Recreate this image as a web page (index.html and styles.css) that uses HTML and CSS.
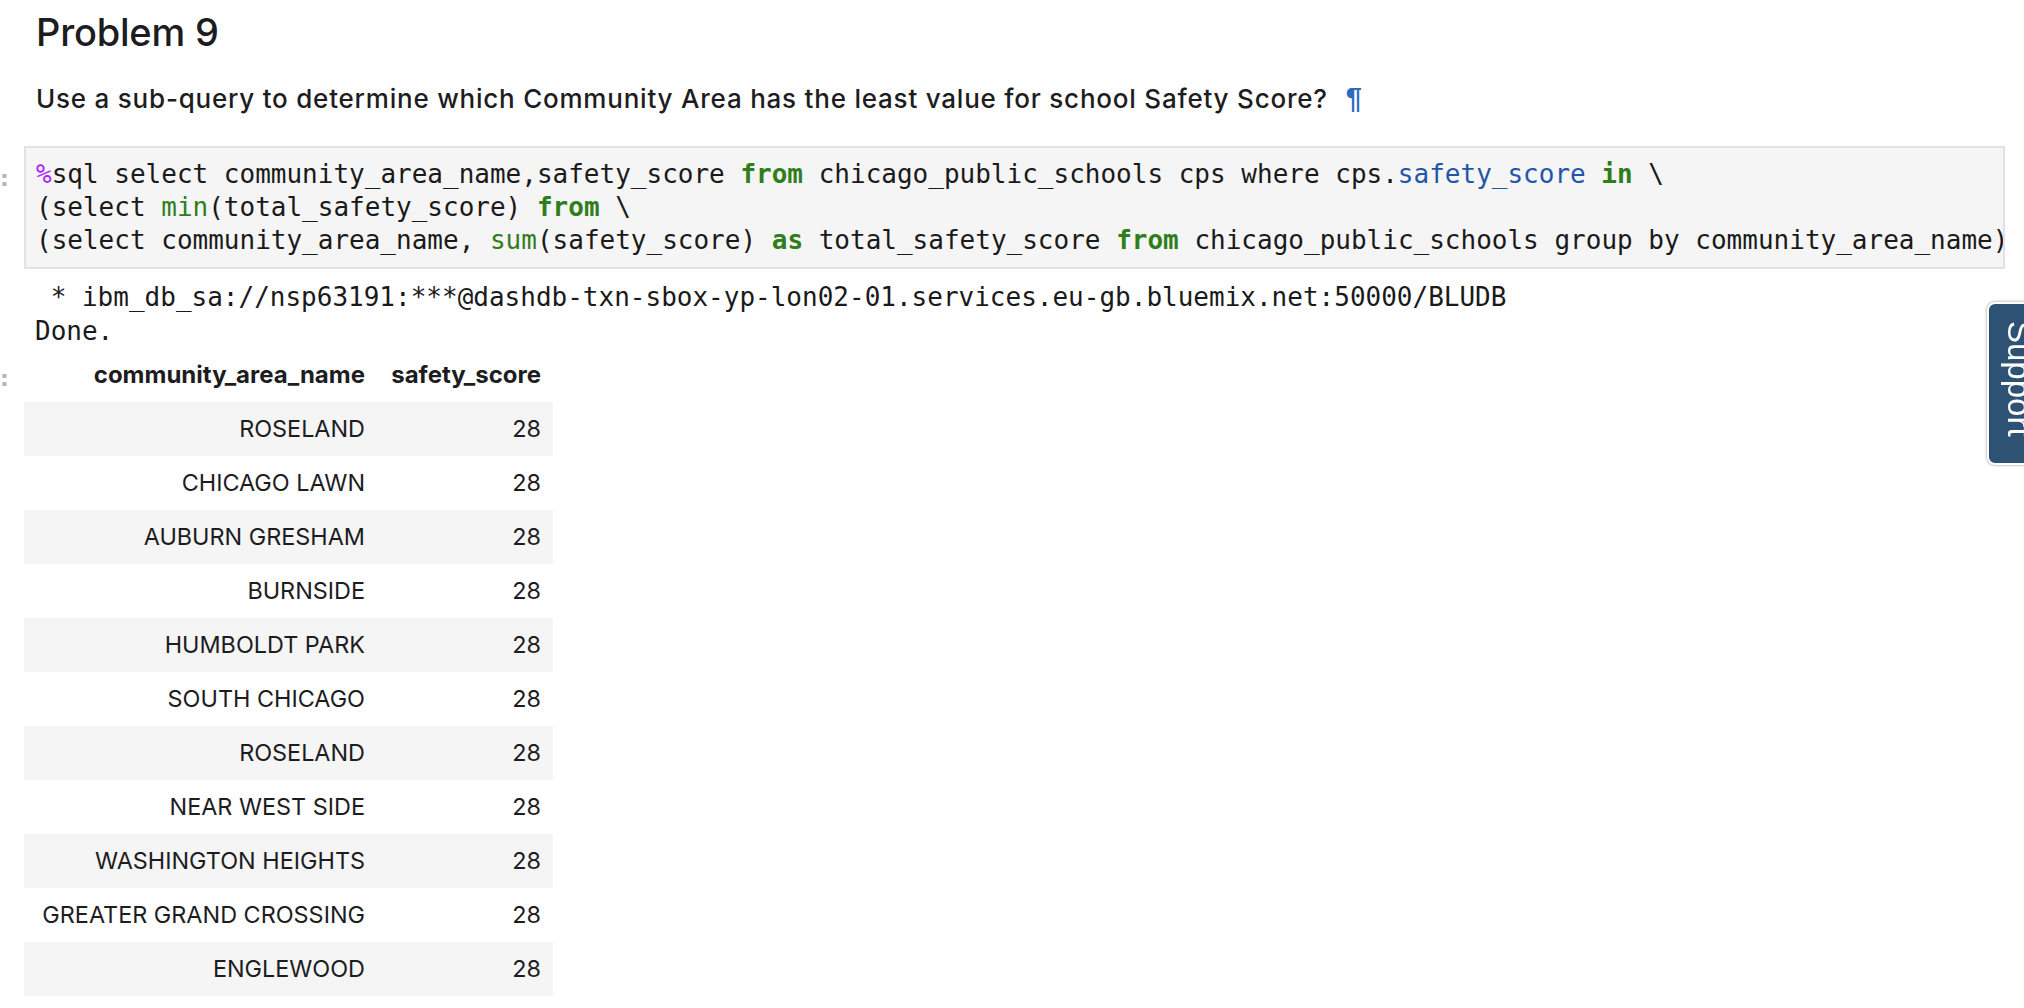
FILE: index.html
```html
<!DOCTYPE html>
<html lang="en">
<head>
<meta charset="utf-8">
<title>Problem 9</title>
<link rel="stylesheet" href="styles.css">
</head>
<body>
<div class="notebook">
  <div class="cell md-cell">
    <div class="prompt"></div>
    <div class="md-body">
      <h2 class="title">Problem 9</h2>
      <p class="question">Use a sub-query to determine which Community Area has the least value for school Safety Score?<a class="anchor" href="#">¶</a></p>
    </div>
  </div>

  <div class="cell code-cell">
    <div class="prompt code-prompt"><span class="colon">:</span></div>
    <pre class="input"><span class="magic">%</span>sql select community_area_name,safety_score <span class="kw">from</span> chicago_public_schools cps where cps.<span class="prop">safety_score</span> <span class="kw">in</span> \
(select <span class="bi">min</span>(total_safety_score) <span class="kw">from</span> \
(select community_area_name, <span class="bi">sum</span>(safety_score) <span class="kw">as</span> total_safety_score <span class="kw">from</span> chicago_public_schools group by community_area_name)</pre>
  </div>

  <div class="cell out-cell">
    <div class="prompt"></div>
    <pre class="stream"> * ibm_db_sa://nsp63191:***@dashdb-txn-sbox-yp-lon02-01.services.eu-gb.bluemix.net:50000/BLUDB
Done.</pre>
  </div>

  <div class="cell out-cell">
    <div class="prompt table-prompt"><span class="colon">:</span></div>
    <table class="result">
      <thead>
        <tr><th class="c1">community_area_name</th><th class="c2">safety_score</th></tr>
      </thead>
      <tbody>
        <tr><td>ROSELAND</td><td>28</td></tr>
        <tr><td>CHICAGO LAWN</td><td>28</td></tr>
        <tr><td>AUBURN GRESHAM</td><td>28</td></tr>
        <tr><td>BURNSIDE</td><td>28</td></tr>
        <tr><td>HUMBOLDT PARK</td><td>28</td></tr>
        <tr><td>SOUTH CHICAGO</td><td>28</td></tr>
        <tr><td>ROSELAND</td><td>28</td></tr>
        <tr><td>NEAR WEST SIDE</td><td>28</td></tr>
        <tr><td>WASHINGTON HEIGHTS</td><td>28</td></tr>
        <tr><td>GREATER GRAND CROSSING</td><td>28</td></tr>
        <tr><td>ENGLEWOOD</td><td>28</td></tr>
      </tbody>
    </table>
  </div>
</div>

<div class="support"><span class="support-label">Support</span></div>
</body>
</html>
```

FILE: styles.css
```css
* {
  box-sizing: border-box;
}

html,
body {
  margin: 0;
  padding: 0;
  background: #ffffff;
}

body {
  font-family: Inter, "Noto Sans", sans-serif;
  color: #1d1d1f;
  overflow: hidden;
}

.notebook {
  width: 2005px;
  padding-top: 9px;
}

.cell {
  display: flex;
  align-items: flex-start;
}

.prompt {
  flex: none;
  width: 24px;
  color: #b4b4b4;
  font-family: "DejaVu Sans", sans-serif;
  font-weight: bold;
  font-size: 22px;
  line-height: 22px;
}

.code-prompt {
  padding-top: 22px;
}

.table-prompt {
  padding-top: 20px;
}

.md-body {
  flex: 1;
  padding-left: 12px;
}

.title {
  margin: 0;
  font-size: 38px;
  line-height: 46px;
  font-weight: 500;
  letter-spacing: -0.2px;
}

.question {
  margin: 27px 0 31px;
  font-size: 26px;
  line-height: 32px;
  font-weight: 500;
  letter-spacing: 0.78px;
}

.anchor {
  color: #2a6dbf;
  text-decoration: none;
  margin-left: 18px;
  font-family: "Liberation Sans", Arial, sans-serif;
  font-weight: 700;
  font-size: 29px;
}

.input {
  flex: 1;
  margin: 0;
  background: #f5f5f5;
  border: 2px solid #e2e2e2;
  padding: 10px;
  font-family: "DejaVu Sans Mono", monospace;
  font-size: 26px;
  line-height: 33px;
  color: #1a1a1a;
  white-space: pre;
  overflow: hidden;
}

.magic {
  color: #aa22ff;
}

.kw {
  color: #2f7d1b;
  font-weight: bold;
}

.bi {
  color: #2f7d1b;
}

.prop {
  color: #1f56a8;
}

.stream {
  margin: 11px 0 0;
  padding-left: 11px;
  font-family: "DejaVu Sans Mono", monospace;
  font-size: 26px;
  line-height: 34px;
  color: #1a1a1a;
}

.result {
  border-collapse: collapse;
  font-size: 23.4px;
  line-height: 30px;
  color: #1d1d1f;
}

.result th,
.result td {
  height: 54px;
  padding: 0 12px;
  text-align: right;
  vertical-align: middle;
  white-space: nowrap;
}

.result th {
  font-weight: 700;
  font-size: 24px;
}

.result .c1 {
  width: 353px;
}

.result .c2 {
  width: 176px;
}

.result tbody tr:nth-child(odd) {
  background: #f5f5f5;
}

.support {
  position: fixed;
  top: 302px;
  left: 1987px;
  width: 70px;
  height: 163px;
  background: #2d5274;
  border: 2px solid #ffffff;
  border-radius: 8px;
  box-shadow: 0 0 3px rgba(0, 0, 0, 0.45);
  padding: 17px 0 0 10px;
}

.support-label {
  writing-mode: vertical-rl;
  color: #ffffff;
  font-family: "Liberation Sans", Arial, sans-serif;
  font-size: 33px;
  line-height: 40px;
}
```
